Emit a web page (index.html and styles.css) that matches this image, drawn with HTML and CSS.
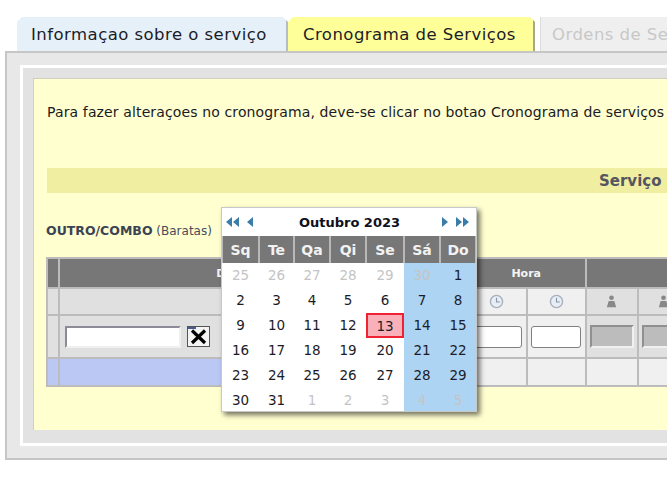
FILE: index.html
```html
<!DOCTYPE html>
<html lang="pt">
<head>
    <meta charset="UTF-8">
    <title>Cronograma de Serviços</title>
    <link rel="stylesheet" href="styles.css">
</head>
<body>
    <div class="tabs">
        <div class="tab tab-info">Informaçao sobre o serviço</div>
        <div class="tab tab-crono">Cronograma de Serviços</div>
        <div class="tab tab-ordens">Ordens de Serviço</div>
    </div>
    <div class="panel">
        <div class="frame">
            <div class="content">
                <p class="notice">Para fazer alteraçoes no cronograma, deve-se clicar no botao Cronograma de serviços</p>
                <div class="band"><span class="band-title">Serviço</span></div>
                <div class="caption"><b>OUTRO/COMBO</b> (Baratas)</div>
                <table class="grid">
                    <colgroup>
                        <col class="c-idx"><col class="c-date"><col class="c-date2"><col class="c-gap">
                        <col class="c-time1"><col class="c-time2"><col class="c-person"><col class="c-person">
                    </colgroup>
                    <tr class="row-head">
                        <th></th>
                        <th colspan="2">Data</th>
                        <th></th>
                        <th colspan="2">Hora</th>
                        <th colspan="2"></th>
                    </tr>
                    <tr class="row-icons">
                        <td></td><td></td><td></td><td></td>
                        <td class="light">
                            <svg class="ico" viewBox="0 0 16 16"><circle cx="8" cy="8" r="6.5" fill="#e8eef6" stroke="#a8b0bc" stroke-width="1.5"/><path d="M8 4v4.500h3.500" fill="none" stroke="#8a94a4" stroke-width="1.200"/></svg>
                        </td>
                        <td class="light">
                            <svg class="ico" viewBox="0 0 16 16"><circle cx="8" cy="8" r="6.5" fill="#e8eef6" stroke="#a8b0bc" stroke-width="1.5"/><path d="M8 4v4.500h3.500" fill="none" stroke="#8a94a4" stroke-width="1.200"/></svg>
                        </td>
                        <td>
                            <svg class="ico" viewBox="0 0 16 16"><circle cx="8" cy="4" r="2.500" fill="#888888"/><path d="M3 14l2-6.500h6l2 6.500z" fill="#888888"/></svg>
                        </td>
                        <td>
                            <svg class="ico" viewBox="0 0 16 16"><circle cx="8" cy="4" r="2.500" fill="#888888"/><path d="M3 14l2-6.500h6l2 6.500z" fill="#888888"/></svg>
                        </td>
                    </tr>
                    <tr class="row-input">
                        <td></td>
                        <td colspan="2">
                            <div class="date-field">
                                <input class="date-input" type="text">
                                <svg class="clear-btn" viewBox="0 0 23 21">
                                    <rect x="0.500" y="0.500" width="22" height="20" fill="#f4f4f4" stroke="#555"/>
                                    <rect x="1" y="1" width="8" height="2" fill="#4a5a90"/>
                                    <path d="M5 4.500l13 12.500M18 4.500l-13 12.500" stroke="#000" stroke-width="3.200"/>
                                </svg>
                            </div>
                        </td>
                        <td></td>
                        <td class="light"><input class="time-input" type="text"></td>
                        <td class="light"><input class="time-input" type="text"></td>
                        <td><span class="grey-input"></span></td>
                        <td><span class="grey-input"></span></td>
                    </tr>
                    <tr class="row-total">
                        <td class="blue"></td>
                        <td class="blue" colspan="2"></td>
                        <td class="blue"></td>
                        <td class="light"></td><td class="light"></td><td class="light"></td><td class="light"></td>
                    </tr>
                </table>
            </div>
        </div>
    </div>

    <!-- calendar popup, sits over the table -->
    <div class="cal">
        <div class="cal-nav">
            <span class="cal-arrows">
                <svg class="arrow" width="16" height="10" viewBox="0 0 16 10"><path d="M7 0v10L1 5zM14 0v10L8 5z"/></svg>
                <svg class="arrow arrow-one" width="8" height="10" viewBox="0 0 8 10"><path d="M7 0v10L1 5z"/></svg>
            </span>
            <span class="cal-month">Outubro 2023</span>
            <span class="cal-arrows">
                <svg class="arrow arrow-next" width="8" height="10" viewBox="0 0 8 10"><path d="M1 0v10l6-5z"/></svg>
                <svg class="arrow" width="16" height="10" viewBox="0 0 16 10"><path d="M2 0v10l6-5zM9 0v10l6-5z"/></svg>
            </span>
        </div>
        <div class="cal-grid">
            <div class="wd">Sq</div><div class="wd">Te</div><div class="wd">Qa</div><div class="wd">Qi</div><div class="wd">Se</div><div class="wd">Sá</div><div class="wd">Do</div>
            <div class="off">25</div><div class="off">26</div><div class="off">27</div><div class="off">28</div><div class="off">29</div><div class="we off">30</div><div class="we">1</div>
            <div>2</div><div>3</div><div>4</div><div>5</div><div>6</div><div class="we">7</div><div class="we">8</div>
            <div>9</div><div>10</div><div>11</div><div>12</div><div class="today">13</div><div class="we">14</div><div class="we">15</div>
            <div>16</div><div>17</div><div>18</div><div>19</div><div>20</div><div class="we">21</div><div class="we">22</div>
            <div>23</div><div>24</div><div>25</div><div>26</div><div>27</div><div class="we">28</div><div class="we">29</div>
            <div>30</div><div>31</div><div class="off">1</div><div class="off">2</div><div class="off">3</div><div class="we off">4</div><div class="we off">5</div>
        </div>
    </div>
</body>
</html>
```

FILE: styles.css
```css
html, body{
    height: 495px;
}
body{
    margin: 0;
    width: 667px;
    overflow: hidden;
    position: relative;
    background-color: #ffffff;
    font-family: "DejaVu Sans", Verdana, sans-serif;
    color: #1c1c28;
}
/* tabs */
.tabs{
    display: flex;
    padding: 17px 0 0 17px;
    width: 900px;
    height: 34px;
    box-sizing: content-box;
}
.tab{
    height: 34px;
    line-height: 35px;
    font-size: 16.5px;
    letter-spacing: 0.46px;
    box-sizing: border-box;
    white-space: nowrap;
    flex: none;
    border-right: 2px solid #b4bcc4;
}
.tab-info{
    width: 271px;
    padding-left: 14px;
    background-color: #e6f0f8;
    clip-path: polygon(5px 0, calc(100% - 5px) 0, 100% 5px, 100% 100%, 0 100%, 0 5px);
}
.tab-crono{
    width: 247px;
    padding-left: 15px;
    background-color: #ffff99;
    border-right-color: #a8a888;
    clip-path: polygon(5px 0, calc(100% - 5px) 0, 100% 5px, 100% 100%, 0 100%, 0 5px);
}
.tab-ordens{
    width: 200px;
    margin-left: 5px;
    padding-left: 11px;
    background-color: #efefef;
    color: #c8c8c8;
    border-right: 0;
    border-left: 1px solid #dcdcdc;
}
/* nested boxes */
.panel{
    margin-left: 5px;
    width: 800px;
    height: 409px;
    box-sizing: border-box;
    padding: 12px 0 12px 13px;
    background-color: #e8e8e8;
    border: 2px solid #c6c6c6;
    border-right: 0;
}
.frame{
    height: 381px;
    box-sizing: border-box;
    padding: 10px 0 12px 10px;
    background-color: #e2e2e2;
    border: 3px solid #ffffff;
    border-right: 0;
}
.content{
    height: 352px;
    box-sizing: border-box;
    padding: 0 0 0 13px;
    background-color: #ffffd0;
    border-top: 1px solid #d0d0c0;
    border-left: 1px solid #d0d0c0;
}
.notice{
    margin: 0;
    padding-top: 25px;
    height: 64px;
    box-sizing: content-box;
    line-height: 17px;
    font-size: 14px;
    letter-spacing: 0.13px;
    white-space: nowrap;
    color: #1a1a24;
}
.band{
    height: 25px;
    line-height: 26px;
    padding-left: 552px;
    background-color: #f0eea0;
}
.band-title{
    font-size: 15px;
    font-weight: bold;
    color: #555560;
}
.caption{
    margin-top: 30px;
    margin-left: -1px;
    height: 16px;
    line-height: 16px;
    font-size: 12px;
    color: #484c5c;
}
.caption b{
    font-size: 12.5px;
    color: #3c4454;
}
/* table */
.grid{
    margin-top: 18px;
    margin-left: -1px;
    table-layout: fixed;
    width: 645px;
    border-collapse: separate;
    border-spacing: 2px;
    background-color: #bcbcbc;
}
.c-idx{ width: 10px; }
.c-date{ width: 170px; }
.c-date2{ width: 169px; }
.c-gap{ width: 62px; }
.c-time1{ width: 58px; }
.c-time2{ width: 57px; }
.c-person{ width: 50px; }
.grid th{
    background-color: #777777;
    color: #f4f4f4;
    font-size: 11px;
    font-weight: bold;
    padding: 0;
}
.grid td{
    background-color: #e0e0e0;
    padding: 0;
    text-align: center;
}
.grid td.light{
    background-color: #f0f0f0;
}
.grid td.blue{
    background-color: #bcc8f4;
}
.row-head{ height: 28px; }
.row-icons{ height: 25px; }
.row-input{ height: 41px; }
.row-total{ height: 26px; }
.ico{
    display: block;
    margin: 0 auto;
    width: 15px;
    height: 15px;
}
.date-field{
    display: flex;
    align-items: center;
    gap: 6px;
    padding-left: 5px;
}
.date-input{
    width: 116px;
    height: 22px;
    box-sizing: border-box;
    padding: 0;
    background-color: #ffffff;
    border: 2px solid;
    border-color: #8c8c98 #f0f0f0 #f0f0f0 #8c8c98;
}
.clear-btn{
    width: 23px;
    height: 21px;
}
.time-input{
    display: block;
    margin: 0 auto;
    width: 50px;
    height: 22px;
    box-sizing: border-box;
    padding: 0;
    background-color: #ffffff;
    border: 1px solid #808080;
    border-radius: 3px;
}
.grey-input{
    display: block;
    margin: 0 3px;
    width: 44px;
    height: 23px;
    box-sizing: border-box;
    background-color: #bcbcbc;
    border: 2px solid;
    border-color: #909090 #f0f0f0 #f0f0f0 #909090;
}
/* calendar */
.cal{
    position: absolute;
    left: 221px;
    top: 207px;
    width: 256px;
    box-sizing: border-box;
    background-color: #ffffff;
    border: 1px solid #c8c8c8;
    box-shadow: 3px 3px 5px rgba(0, 0, 0, 0.55);
}
.cal-nav{
    display: flex;
    justify-content: space-between;
    align-items: center;
    height: 28px;
    padding: 0 2px 0 3px;
}
.cal-arrows{
    display: flex;
    align-items: center;
    width: 36px;
}
.arrow{
    fill: #3b7cab;
}
.arrow-one{
    margin-left: 5px;
}
.arrow-next{
    margin-right: 5px;
    margin-left: 3px;
}
.cal-month{
    font-size: 13px;
    font-weight: bold;
    color: #10101c;
}
.cal-grid{
    display: grid;
    grid-template-columns: 37px 35px 36px 36px 38px 36px 36px;
    grid-template-rows: 27px repeat(5, 25px) 23px;
    font-size: 13.5px;
    text-align: center;
}
.cal-grid div{
    line-height: 25px;
}
.cal-grid .wd{
    line-height: 28px;
    background-color: #777777;
    color: #f2f2f2;
    font-weight: bold;
    font-size: 14px;
    border-right: 1px solid #b8b8b8;
    border-left: 1px solid #b8b8b8;
}
.cal-grid .we{
    background-color: #aed4f4;
}
.cal-grid .off{
    color: #c4c4c4;
}
.cal-grid .today{
    background-color: #f9b0b8;
    border: 2px solid #ee2233;
    line-height: 22px;
}
```
